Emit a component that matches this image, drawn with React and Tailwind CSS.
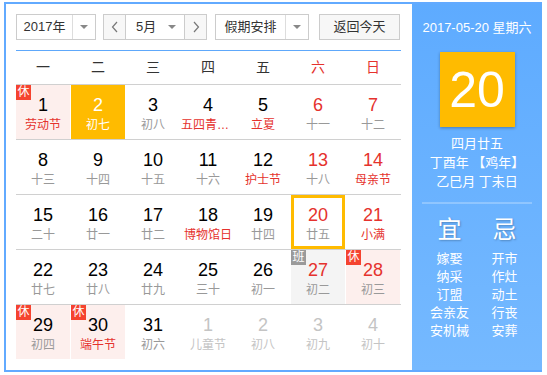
import React from "react";

const WEEK = [
  { t: "一" },
  { t: "二" },
  { t: "三" },
  { t: "四" },
  { t: "五" },
  { t: "六", red: true },
  { t: "日", red: true },
];

// kind: rest / work / hover / today / next
const ROWS = [
  [
    { d: 1, l: "劳动节", lr: true, kind: "rest" },
    { d: 2, l: "初七", kind: "hover" },
    { d: 3, l: "初八" },
    { d: 4, l: "五四青年节", lr: true },
    { d: 5, l: "立夏", lr: true },
    { d: 6, l: "十一", dr: true },
    { d: 7, l: "十二", dr: true },
  ],
  [
    { d: 8, l: "十三" },
    { d: 9, l: "十四" },
    { d: 10, l: "十五" },
    { d: 11, l: "十六" },
    { d: 12, l: "护士节", lr: true },
    { d: 13, l: "十八", dr: true },
    { d: 14, l: "母亲节", dr: true, lr: true },
  ],
  [
    { d: 15, l: "二十" },
    { d: 16, l: "廿一" },
    { d: 17, l: "廿二" },
    { d: 18, l: "博物馆日", lr: true },
    { d: 19, l: "廿四" },
    { d: 20, l: "廿五", dr: true, kind: "today" },
    { d: 21, l: "小满", dr: true, lr: true },
  ],
  [
    { d: 22, l: "廿七" },
    { d: 23, l: "廿八" },
    { d: 24, l: "廿九" },
    { d: 25, l: "三十" },
    { d: 26, l: "初一" },
    { d: 27, l: "初二", dr: true, kind: "work" },
    { d: 28, l: "初三", dr: true, kind: "rest" },
  ],
  [
    { d: 29, l: "初四", kind: "rest" },
    { d: 30, l: "端午节", lr: true, kind: "rest" },
    { d: 31, l: "初六" },
    { d: 1, l: "儿童节", kind: "next" },
    { d: 2, l: "初八", kind: "next" },
    { d: 3, l: "初九", kind: "next" },
    { d: 4, l: "初十", kind: "next" },
  ],
];

const YI = ["嫁娶", "纳采", "订盟", "会亲友", "安机械"];
const JI = ["开市", "作灶", "动土", "行丧", "安葬"];

const FONT = "font-['Liberation_Sans','Noto_Sans_CJK_SC',sans-serif]";

function Caret() {
  return <span className="w-0 h-0 border-x-[4px] border-x-transparent border-t-[4px] border-t-[#888]" />;
}

function Chevron({ dir }) {
  return (
    <svg width="8" height="12" viewBox="0 0 8 12" fill="none" stroke="#777" strokeWidth="1.2">
      {dir === "left" ? <path d="M6 1 L1.5 6 L6 11" /> : <path d="M2 1 L6.5 6 L2 11" />}
    </svg>
  );
}

function Cell({ c }) {
  let box = "bg-white";
  let num = c.dr ? "text-[#e5322d]" : "text-black";
  let lunar = c.lr ? "text-[#e5322d]" : "text-[#999]";
  if (c.kind === "rest") box = "bg-[#fdefed]";
  if (c.kind === "work") box = "bg-[#f4f4f4]";
  if (c.kind === "hover") {
    box = "bg-[#ffbb00]";
    num = "text-white";
    lunar = "text-white";
  }
  if (c.kind === "today") box = "bg-white border-[3px] border-[#ffbb00]";
  if (c.kind === "next") {
    num = "text-[#c4c4c4]";
    lunar = "text-[#c4c4c4]";
  }
  return (
    <div className={`relative h-[54px] flex flex-col items-center ${box}`}>
      {c.kind === "rest" && (
        <span className="absolute left-0 top-0 w-[15px] h-[15px] bg-[#f5432f] text-white text-[12px] leading-[15px] text-center">
          休
        </span>
      )}
      {c.kind === "work" && (
        <span className="absolute left-0 top-0 w-[15px] h-[15px] bg-[#9a9a9a] text-white text-[12px] leading-[15px] text-center">
          班
        </span>
      )}
      <div className={`w-full flex flex-col items-center ${c.kind === "today" ? "-mt-[3px]" : ""}`}>
        <span className={`mt-[9px] text-[18px] leading-[22px] ${num}`}>{c.d}</span>
        <span className={`mt-[2px] w-full text-center text-[12px] leading-[15px] whitespace-nowrap overflow-hidden text-ellipsis ${lunar}`}>
          {c.l}
        </span>
      </div>
    </div>
  );
}

export default function App() {
  return (
    <div className={`ml-[4px] mt-[2px] w-[538px] h-[370px] border-2 border-[#62aaff] flex bg-white ${FONT}`}>
      <div className="w-[406px] pl-[10px] pt-[10px]">
        {/* toolbar */}
        <div className="flex items-center h-[26px] text-[13px] text-[#333]">
          <div className="w-[80px] h-[26px] border border-[#ccc] flex">
            <span className="w-[55px] flex items-center justify-center">2017年</span>
            <span className="flex-1 border-l border-[#ddd] flex items-center justify-center">
              <Caret />
            </span>
          </div>
          <div className="ml-[7px] w-[104px] h-[26px] border border-[#ccc] flex">
            <span className="w-[22px] bg-[#f7f7f7] border-r border-[#ccc] flex items-center justify-center">
              <Chevron dir="left" />
            </span>
            <span className="flex-1 flex items-center pl-[10px] pr-[8px] justify-between">
              5月
              <Caret />
            </span>
            <span className="w-[22px] bg-[#f7f7f7] border-l border-[#ccc] flex items-center justify-center">
              <Chevron dir="right" />
            </span>
          </div>
          <div className="ml-[8px] w-[94px] h-[26px] border border-[#ccc] flex">
            <span className="w-[69px] flex items-center justify-center">假期安排</span>
            <span className="flex-1 border-l border-[#ddd] flex items-center justify-center">
              <Caret />
            </span>
          </div>
          <div className="ml-[10px] w-[81px] h-[26px] border border-[#ccc] bg-[#f7f7f7] flex items-center justify-center">
            返回今天
          </div>
        </div>

        <div className="mt-[10px] w-[385px] h-[1px] bg-[#5ea8fb]" />

        {/* weekday header */}
        <div className="w-[385px] grid grid-cols-[repeat(7,54px)] gap-x-[1px] h-[33px] items-center text-[14px]">
          {WEEK.map((w) => (
            <span key={w.t} className={`text-center ${w.red ? "text-[#e5322d]" : "text-[#333]"}`}>
              {w.t}
            </span>
          ))}
        </div>

        {/* days */}
        <div className="w-[385px]">
          {ROWS.map((row, i) => (
            <div key={i} className="border-t border-[#d0d0d0] grid grid-cols-[repeat(7,54px)] gap-x-[1px]">
              {row.map((c, j) => (
                <Cell key={j} c={c} />
              ))}
            </div>
          ))}
        </div>
      </div>

      {/* side panel */}
      <div className="flex-1 -mr-[2px] bg-gradient-to-b from-[#5eabff] to-[#75b9ff] text-white flex flex-col items-center">
        <div className="mt-[15px] text-[13px] leading-[18px]">2017-05-20 星期六</div>
        <div className="mt-[15px] w-[75px] h-[75px] bg-[#ffbb00] shadow-[0_1px_3px_rgba(0,0,0,0.3)] flex items-center justify-center text-[50px] leading-none">
          20
        </div>
        <div className="mt-[7px] text-[13px] leading-[19px] text-center">
          <div>四月廿五</div>
          <div>丁酉年 【鸡年】</div>
          <div>乙巳月 丁未日</div>
        </div>
        <div className="mt-[11px] w-[110px] h-[2px] bg-white/25" />
        <div className="mt-[12px] w-[110px] grid grid-cols-2">
          <div className="flex flex-col items-center">
            <span className="text-[24px] leading-[28px] [text-shadow:1px_1px_2px_rgba(0,0,0,0.25)]">宜</span>
            <div className="mt-[6px] text-[13px] leading-[18px] text-center">
              {YI.map((t) => (
                <div key={t}>{t}</div>
              ))}
            </div>
          </div>
          <div className="flex flex-col items-center">
            <span className="text-[24px] leading-[28px] [text-shadow:1px_1px_2px_rgba(0,0,0,0.25)]">忌</span>
            <div className="mt-[6px] text-[13px] leading-[18px] text-center">
              {JI.map((t) => (
                <div key={t}>{t}</div>
              ))}
            </div>
          </div>
        </div>
      </div>
    </div>
  );
}
